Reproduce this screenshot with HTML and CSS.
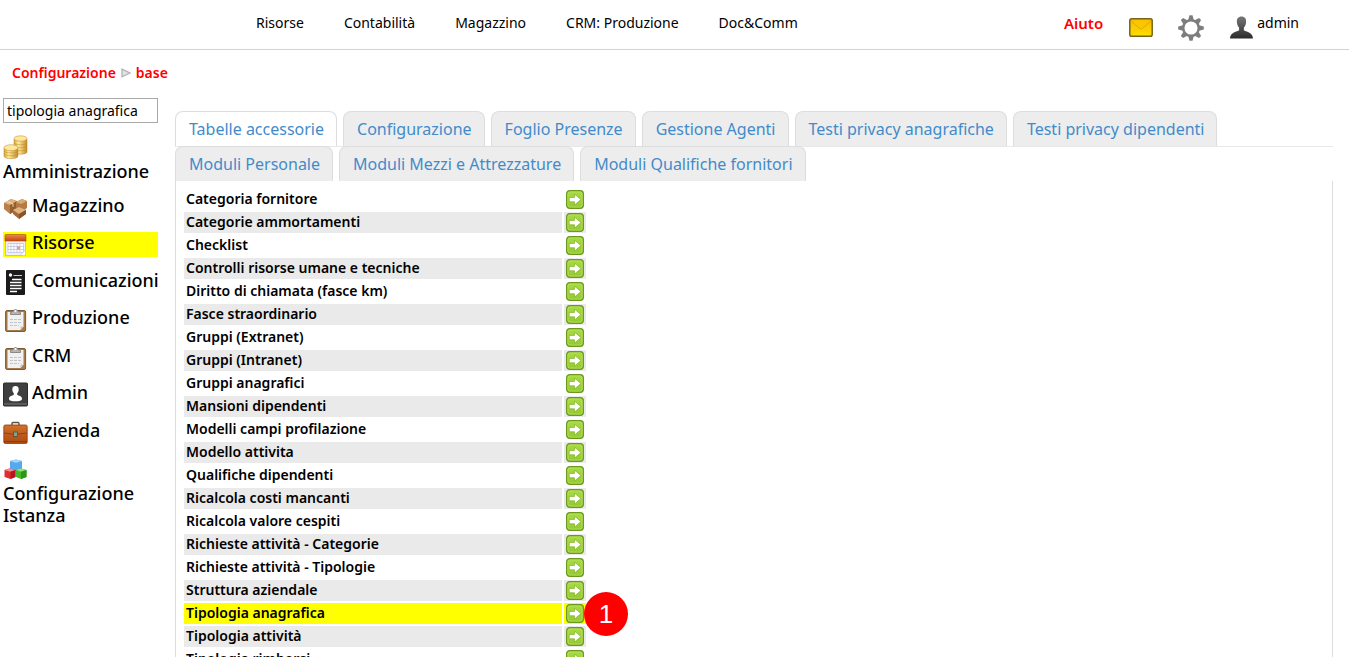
FILE: index.html
```html
<!DOCTYPE html>
<html lang="it">
<head>
<meta charset="utf-8">
<title>Configurazione base</title>
<link rel="stylesheet" href="styles.css">
</head>
<body>
<svg class="defs" aria-hidden="true">
  <defs>
    <linearGradient id="green" x1="0" y1="0" x2="0" y2="1"><stop offset="0" stop-color="#aadb42"/><stop offset="1" stop-color="#93c930"/></linearGradient>
    <linearGradient id="gold" x1="0" y1="0" x2="1" y2="0"><stop offset="0" stop-color="#dba83c"/><stop offset=".35" stop-color="#ffe99a"/><stop offset="1" stop-color="#c58a20"/></linearGradient>
    <linearGradient id="mail" x1="0" y1="0" x2="0" y2="1"><stop offset="0" stop-color="#f5b800"/><stop offset="1" stop-color="#ffe000"/></linearGradient>
    <linearGradient id="person" x1="0" y1="0" x2="0" y2="1"><stop offset="0" stop-color="#777"/><stop offset="1" stop-color="#2b2b2b"/></linearGradient>
    <linearGradient id="leather" x1="0" y1="0" x2="0" y2="1"><stop offset="0" stop-color="#d0712c"/><stop offset="1" stop-color="#ad4b10"/></linearGradient>
    <linearGradient id="orange" x1="0" y1="0" x2="0" y2="1"><stop offset="0" stop-color="#e98a52"/><stop offset="1" stop-color="#c4450d"/></linearGradient>
    <symbol id="go" viewBox="0 0 18 19">
      <rect x=".7" y=".7" width="16.6" height="17.6" rx="3" fill="url(#green)" stroke="#6b9a1e" stroke-width="1.4"/>
      <rect x="1.900" y="1.900" width="14.200" height="15.200" rx="2" fill="none" stroke="#bce467" stroke-width=".8"/>
      <path d="M3.200 7.400h5.300V4.200l6.500 5.400-6.500 5.400v-3.200H3.200z" fill="#fff" stroke="#7fb022" stroke-width=".7"/>
    </symbol>
    <symbol id="clipboard" viewBox="0 0 25 25">
      <rect x="2.600" y="3.500" width="20" height="21" rx="1.500" fill="#a57b4b" stroke="#80592f"/>
      <path d="M4.500 5h16v14.500L17.500 23h-13z" fill="#f1f1f1"/><path d="M20.500 19.500h-3V23z" fill="#c6c6c6"/>
      <path d="M7 12.500h11M7 15.500h11M7 18.500h9" stroke="#c4c4c4" stroke-dasharray="3 1"/>
      <path d="M7.500 7.500V5.500l2.500-1a2.600 2.600 0 0 1 5 0l2.500 1v2z" fill="#b5b5b5" stroke="#777" stroke-width=".8"/>
      <circle cx="12.500" cy="3.900" r="1" fill="#fff"/>
    </symbol>
  </defs>
</svg>

<header class="topbar">
  <nav class="menu">
    <a href="#">Risorse</a>
    <a href="#">Contabilità</a>
    <a href="#">Magazzino</a>
    <a href="#">CRM: Produzione</a>
    <a href="#">Doc&amp;Comm</a>
  </nav>
  <div class="tools">
    <a class="help" href="#">Aiuto</a>
    <a class="tool" href="#" aria-label="Messaggi"><svg width="24" height="19" viewBox="0 0 24 19"><rect x=".8" y=".8" width="22.400" height="17.400" rx="1.800" fill="url(#mail)" stroke="#75651c" stroke-width="1.500"/><path d="M2 2.500l8.500 8q1.500 1.200 3 0l8.500-8" fill="#fbc500" stroke="#e0a500" stroke-width=".9"/><path d="M2 17l7-7M22 17l-7-7" stroke="#f1c400" stroke-width=".7"/></svg></a>
    <a class="tool gear" href="#" aria-label="Impostazioni"><svg width="26" height="26" viewBox="-13 -13 26 26"><circle r="7.800" fill="none" stroke="#7d7d7d" stroke-width="2.500"/><g fill="#7d7d7d"><path id="tooth" d="M-2.800-8l1.300-4.800h3L2.800-8z"/><use href="#tooth" transform="rotate(45)"/><use href="#tooth" transform="rotate(90)"/><use href="#tooth" transform="rotate(135)"/><use href="#tooth" transform="rotate(180)"/><use href="#tooth" transform="rotate(225)"/><use href="#tooth" transform="rotate(270)"/><use href="#tooth" transform="rotate(315)"/></g></svg></a>
    <a class="user" href="#"><svg width="25" height="23" viewBox="0 0 25 23"><path d="M12.500.5c3.300 0 4.900 2.300 4.600 5.400-.2 2.400-.9 4.200-2.200 5.600v2.700c1.600 1.500 9.100 1.800 9.100 8.300H1c0-6.500 7.500-6.800 9.100-8.300v-2.700C8.800 10.100 8.100 8.300 7.900 5.900 7.600 2.800 9.200.5 12.500.5z" fill="url(#person)"/></svg><span>admin</span></a>
  </div>
</header>

<nav class="crumbs" aria-label="Percorso">
  <a href="#">Configurazione</a>
  <svg width="10" height="10" viewBox="0 0 10 10"><path d="M1 1.200L9 5 1 8.800z" fill="#e2e2e2" stroke="#b3b3b3" stroke-width="1.300"/></svg>
  <a href="#">base</a>
</nav>

<div class="page">
  <aside class="sidebar">
    <input class="search" type="text" value="tipologia anagrafica" aria-label="Cerca">
    <ul class="modules">
      <li><a class="stacked" href="#"><svg viewBox="0 0 25 25"><g fill="url(#gold)" stroke="#b98a35" stroke-width=".5"><path d="M11 4v13c0 3 13 3 13 0V4z"/><path d="M11 7.500c0 3 13 3 13 0M11 10.500c0 3 13 3 13 0M11 13.500c0 3 13 3 13 0" fill="none"/><ellipse cx="17.500" cy="3.500" rx="6.500" ry="2.700" fill="#ffe89b"/><path d="M1 13v8c0 3.600 14 3.600 14 0v-8z"/><path d="M1 15.500c0 3.200 14 3.200 14 0M1 18.300c0 3.200 14 3.200 14 0" fill="none"/><ellipse cx="8" cy="12.700" rx="7" ry="3" fill="#ffe89b"/></g></svg><span>Amministrazione</span></a></li>
      <li><a href="#"><svg viewBox="0 0 25 25"><path d="M1 8l7-4 6 2v9l-7 4-6-5z" fill="#b9804b"/><path d="M1 8l7-4 6 2-7 4z" fill="#dfb27c"/><path d="M7 10v9l7-4V6z" fill="#95602f"/><path d="M13 7l6-3 5 2v7l-6 4-5-3z" fill="#b67b45"/><path d="M13 7l6-3 5 2-6 3z" fill="#dcaa70"/><path d="M10 15l6-3 7 3v4l-7 5-6-5z" fill="#a56a38"/><path d="M10 15l6-3 7 3-7 4z" fill="#dfb47e"/><path d="M16 19v5l7-5v-4z" fill="#875427"/><path d="M4 6.500l6 2.200v3" stroke="#f3d5aa" fill="none"/></svg><span>Magazzino</span></a></li>
      <li><a class="found" href="#"><svg viewBox="0 0 25 25"><path d="M2.500 5h20v18.500h-20z" fill="#f4eeee" stroke="#c9bcb6"/><path d="M2 3.500q0-1 1-1h19q1 0 1 1V9H2z" fill="url(#orange)" stroke="#a94313" stroke-width=".6"/><g fill="#fff" stroke="#b9bfd8" stroke-width=".7"><path d="M5 11.500h15.500v9H5zM5 14.500h15.500M5 17.500h15.500M8 11.500v9M11 11.500v9M14 11.500v9M17 11.500v9"/></g><path d="M14 14.500h3v3h-3z" fill="#e79a8e"/><path d="M22.500 17.500l-5 6h5z" fill="#fff" stroke="#bbb" stroke-width=".6"/></svg><span>Risorse</span></a></li>
      <li><a href="#"><svg viewBox="0 0 25 25"><rect x="3" y="0" width="19" height="25" rx="1" fill="#1b1b1b"/><path d="M9 9.500h9.500M7 12.500h11.500M7 15.500h11.500M7 18.500h11.500M7 21.500h7" stroke="#fff" stroke-width="1.500"/><path d="M10.500 5.500h8.500" stroke="#ccc"/><circle cx="7.500" cy="5" r="1.700" fill="#fff"/></svg><span>Comunicazioni</span></a></li>
      <li><a href="#"><svg><use href="#clipboard"/></svg><span>Produzione</span></a></li>
      <li><a href="#"><svg><use href="#clipboard"/></svg><span>CRM</span></a></li>
      <li><a href="#"><svg viewBox="0 0 25 25"><rect x=".5" y="1" width="24" height="23" rx="1" fill="#3f3f3f" stroke="#2c2c2c"/><path d="M1 22h23" stroke="#777"/><path d="M12.500 4c2.300 0 3.400 1.500 3.200 3.700-.1 1.500-.7 2.700-1.500 3.500v1.500c1.200 1 4.800 1.200 4.800 4 0 1.900-3 2.600-6.500 2.600S6 18.600 6 16.700c0-2.800 3.600-3 4.800-4v-1.500C10 10.400 9.400 9.200 9.300 7.700 9.100 5.500 10.200 4 12.500 4z" fill="#fff"/></svg><span>Admin</span></a></li>
      <li><a href="#"><svg viewBox="0 0 25 25"><path d="M9 5V3.500q0-1 1-1h5q1 0 1 1V5" fill="none" stroke="#655244" stroke-width="1.400"/><rect x=".8" y="5" width="23.400" height="18.500" rx="1.500" fill="url(#leather)" stroke="#8b3c0c" stroke-width=".8"/><path d="M1 13q11.500 3 23 0" fill="none" stroke="#8f4214"/><path d="M1 21.500h23" stroke="#8e3b0a"/><rect x="10.500" y="12" width="4" height="4.500" fill="#8ca08e" stroke="#4e5140" stroke-width=".8"/></svg><span>Azienda</span></a></li>
      <li><a class="stacked" href="#"><svg viewBox="0 0 25 25"><path d="M7 4l6-1.500L19 4v8l-6 2-6-2z" fill="#57a9ef"/><path d="M7 4l6-1.500L19 4l-6 1.700z" fill="#a6d5fb"/><path d="M1.500 13l5-1.500 6 1.500v7l-5 2-6-2z" fill="#e12c33"/><path d="M1.500 13l5-1.500 6 1.500-5 1.700z" fill="#f58d8e"/><path d="M7.500 14.700V22l5-2v-7z" fill="#b51520"/><path d="M13 13l5-1.500 5.500 1.500v7L18 22l-5-2z" fill="#43b92a"/><path d="M13 13l5-1.500 5.500 1.500-5.500 1.700z" fill="#92e275"/><path d="M18 14.700V22l5.500-2v-7z" fill="#2c951a"/></svg><span>Configurazione Istanza</span></a></li>
    </ul>
  </aside>

  <main class="content">
    <nav class="tabs">
      <div class="tabrow first">
        <a class="tab active" href="#" aria-current="page">Tabelle accessorie</a>
        <a class="tab" href="#">Configurazione</a>
        <a class="tab" href="#">Foglio Presenze</a>
        <a class="tab" href="#">Gestione Agenti</a>
        <a class="tab" href="#">Testi privacy anagrafiche</a>
        <a class="tab" href="#">Testi privacy dipendenti</a>
      </div>
      <div class="tabrow">
        <a class="tab" href="#">Moduli Personale</a>
        <a class="tab" href="#">Moduli Mezzi e Attrezzature</a>
        <a class="tab" href="#">Moduli Qualifiche fornitori</a>
      </div>
    </nav>
    <div class="panel">
      <table class="entries">
        <tbody>
          <tr><td>Categoria fornitore</td><td><a href="#" aria-label="Apri"><svg><use href="#go"/></svg></a></td></tr>
          <tr><td>Categorie ammortamenti</td><td><a href="#" aria-label="Apri"><svg><use href="#go"/></svg></a></td></tr>
          <tr><td>Checklist</td><td><a href="#" aria-label="Apri"><svg><use href="#go"/></svg></a></td></tr>
          <tr><td>Controlli risorse umane e tecniche</td><td><a href="#" aria-label="Apri"><svg><use href="#go"/></svg></a></td></tr>
          <tr><td>Diritto di chiamata (fasce km)</td><td><a href="#" aria-label="Apri"><svg><use href="#go"/></svg></a></td></tr>
          <tr><td>Fasce straordinario</td><td><a href="#" aria-label="Apri"><svg><use href="#go"/></svg></a></td></tr>
          <tr><td>Gruppi (Extranet)</td><td><a href="#" aria-label="Apri"><svg><use href="#go"/></svg></a></td></tr>
          <tr><td>Gruppi (Intranet)</td><td><a href="#" aria-label="Apri"><svg><use href="#go"/></svg></a></td></tr>
          <tr><td>Gruppi anagrafici</td><td><a href="#" aria-label="Apri"><svg><use href="#go"/></svg></a></td></tr>
          <tr><td>Mansioni dipendenti</td><td><a href="#" aria-label="Apri"><svg><use href="#go"/></svg></a></td></tr>
          <tr><td>Modelli campi profilazione</td><td><a href="#" aria-label="Apri"><svg><use href="#go"/></svg></a></td></tr>
          <tr><td>Modello attivita</td><td><a href="#" aria-label="Apri"><svg><use href="#go"/></svg></a></td></tr>
          <tr><td>Qualifiche dipendenti</td><td><a href="#" aria-label="Apri"><svg><use href="#go"/></svg></a></td></tr>
          <tr><td>Ricalcola costi mancanti</td><td><a href="#" aria-label="Apri"><svg><use href="#go"/></svg></a></td></tr>
          <tr><td>Ricalcola valore cespiti</td><td><a href="#" aria-label="Apri"><svg><use href="#go"/></svg></a></td></tr>
          <tr><td>Richieste attività - Categorie</td><td><a href="#" aria-label="Apri"><svg><use href="#go"/></svg></a></td></tr>
          <tr><td>Richieste attività - Tipologie</td><td><a href="#" aria-label="Apri"><svg><use href="#go"/></svg></a></td></tr>
          <tr><td>Struttura aziendale</td><td><a href="#" aria-label="Apri"><svg><use href="#go"/></svg></a></td></tr>
          <tr class="found"><td>Tipologia anagrafica</td><td><a href="#" aria-label="Apri"><svg><use href="#go"/></svg></a><span class="step">1</span></td></tr>
          <tr><td>Tipologia attività</td><td><a href="#" aria-label="Apri"><svg><use href="#go"/></svg></a></td></tr>
          <tr><td>Tipologia rimborsi</td><td><a href="#" aria-label="Apri"><svg><use href="#go"/></svg></a></td></tr>
        </tbody>
      </table>
    </div>
  </main>
</div>
</body>
</html>
```

FILE: styles.css
```css
* { box-sizing: border-box; }
body {
  margin: 0;
  height: 100vh;
  overflow: hidden;
  display: flex;
  flex-direction: column;
  background: #fff;
  color: #000;
  font: 14px/20px "Noto Sans", "Open Sans", sans-serif;
}
a { color: inherit; text-decoration: none; }
svg { display: block; flex: none; }
.defs { position: absolute; width: 0; height: 0; }

.topbar {
  display: flex;
  justify-content: space-between;
  flex: none;
  height: 50px;
  padding: 13px 50px 0 256px;
  border-bottom: 1px solid #d3d3d3;
}
.menu { display: flex; gap: 40px; }
.tools { display: flex; align-items: flex-start; }
.help { color: #f00; font-size: 15px; font-weight: 600; margin-right: 26px; }
.tool { padding-top: 5px; margin-right: 25px; }
.gear { padding-top: 2px; }
.user { display: flex; gap: 3px; }
.user svg { margin-top: 3px; }

.crumbs {
  display: flex;
  align-items: center;
  gap: 5px;
  flex: none;
  padding: 13px 12px 15px;
  color: #f00;
  font-weight: 600;
}

.page { display: flex; flex: 1; min-height: 0; }
.sidebar { flex: none; width: 175px; padding: 0 17px 0 3px; }
.search {
  display: block;
  width: 100%;
  height: 25px;
  padding: 0 17px 0 3px;
  border: 1px solid #a9a9a9;
  font: inherit;
  color: #000;
}
.modules {
  list-style: none;
  margin: 12px 0 0;
  padding: 0;
  font-size: 18px;
  font-weight: 500;
  line-height: 20px;
}
.modules li { margin-bottom: 12px; }
.modules li:nth-child(odd) { margin-bottom: 13px; }
.modules a { display: flex; gap: 4px; min-height: 25px; }
.modules .stacked { flex-direction: column; gap: 0; line-height: 22px; }
.modules svg { width: 25px; height: 25px; }
.modules .found { background: #ff0; }

.content { display: flex; flex-direction: column; flex: 1; min-width: 0; padding: 13px 16px 0 0; }
.tabs { flex: none; }
.tabrow { display: flex; gap: 6px; }
.tabrow.first { border-bottom: 1px solid #e8e8e8; margin-bottom: -1px; }
.tab {
  height: 35px;
  padding: 7px 12px 7px 13px;
  border: 1px solid #ddd;
  border-bottom: 0;
  border-radius: 8px 8px 0 0;
  background: #ededed;
  color: #428bca;
  font-size: 16px;
  white-space: nowrap;
}
.tab.active { background: #fff; }
.panel {
  flex: 1;
  min-height: 0;
  padding: 6px 0 0 6px;
  border: solid #ddd;
  border-width: 0 1px;
}
.entries { border-spacing: 2px; font-size: 14px; font-weight: 600; line-height: 20px; }
.entries td { height: 21px; padding: 0 2px 1px; vertical-align: top; }
.entries td:first-child { width: 378px; }
.entries td:last-child { position: relative; width: 22px; padding-top: 1px; }
.entries svg { width: 18px; height: 19px; }
.entries tr:nth-child(even) td { background: #eaeaea; }
.entries .found td:nth-child(n) { background: #ff0; }
.step {
  position: absolute;
  left: 20px;
  top: -11px;
  display: grid;
  place-items: center;
  width: 44px;
  height: 44px;
  border-radius: 50%;
  background: #f00;
  color: #fff;
  font: 26px/44px "Liberation Sans", Arial, sans-serif;
}
```
